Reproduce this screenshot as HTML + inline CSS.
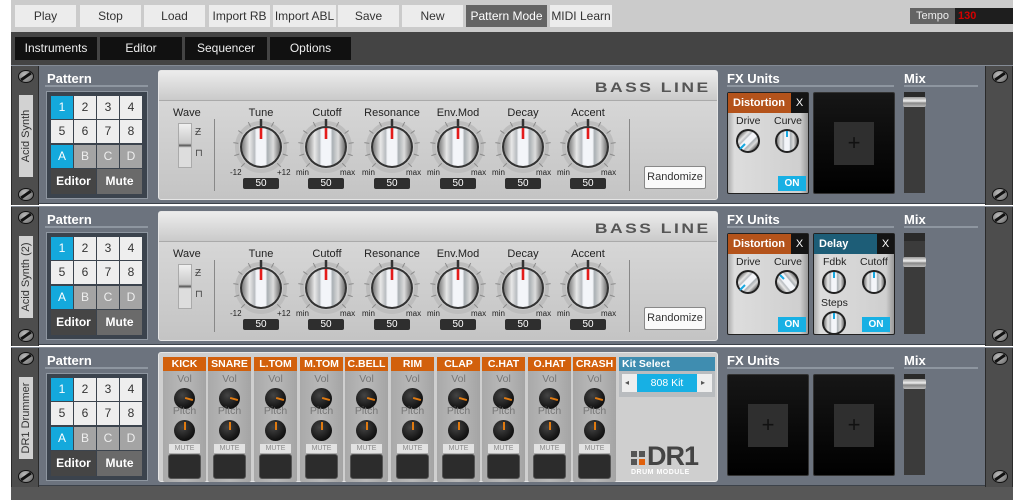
<!DOCTYPE html>
<html><head><meta charset="utf-8"><style>
*{box-sizing:border-box}
body{margin:0;width:1024px;height:500px;overflow:hidden;background:#fff;font-family:"Liberation Sans",sans-serif;position:relative}
.a{position:absolute}
.tb{position:absolute;top:5px;height:22px;background:#ececec;color:#333;font-size:12px;text-align:center;line-height:22px}
.tab{position:absolute;top:37px;height:23px;background:#111;color:#eee;font-size:12px;text-align:center;line-height:23px}
.row{position:absolute;left:11px;width:1002px;height:139px;background:#6c737e;border-top:1px solid #848b95;border-bottom:1px solid #3c424a}
.ear{position:absolute;top:0;width:28px;height:139px;background:#4d4d4d;border-left:1px solid #2a2a2a;border-right:1px solid #2a2a2a}
.scr{position:absolute;left:6px;width:16px;height:13px;border-radius:50%;background:radial-gradient(circle at 40% 35%,#bbb,#666);border:1px solid #111}
.scr:after{content:"";position:absolute;left:1px;top:4px;width:12px;height:3px;background:#111;transform:rotate(-35deg)}
.lbl{position:absolute;left:7px;top:29px;width:14px;height:82px;background:#d2d2d2}
.lbl span{position:absolute;left:50%;top:50%;transform:translate(-50%,-50%) rotate(-90deg);white-space:nowrap;font-size:11px;color:#333}
.h{position:absolute;top:5px;color:#fff;font-weight:bold;font-size:13px}
.hl{position:absolute;top:19px;height:2px;background:#8e96a0}
.grid{position:absolute;left:35px;top:25px;width:102px;height:108px;background:#3b434d;border:1px solid #8e96a0}
.c{position:absolute;width:22px;height:23px;background:#eee;color:#333;font-size:12px;text-align:center;line-height:23px}
.c.b{background:#14a9dc;color:#fff}.c.g{background:#a4a4a4;color:#eee}
.em{position:absolute;top:103px;height:25px;color:#fff;font-size:12px;font-weight:bold;text-align:center;line-height:25px}
.syn{position:absolute;left:147px;top:4px;width:560px;height:130px;background:linear-gradient(#dcdcdc,#c4c4c4);border-radius:3px;border:1px solid #e6e6e6}
.shd{position:absolute;left:0;top:0;width:558px;height:30px;background:linear-gradient(#ececec,#cacaca);border-bottom:1px solid #aaa}
.logo{position:absolute;right:6px;top:8px;font-size:14px;color:#555;font-weight:bold;letter-spacing:2px;transform:scaleX(1.25);transform-origin:right}
.kl{position:absolute;top:36px;width:70px;text-align:center;font-size:11px;color:#222}
.mm{position:absolute;top:97px;font-size:8px;color:#222}
.val{position:absolute;top:107px;width:36px;height:11px;background:#2e2e2e;border-radius:2px;color:#fff;font-size:10px;text-align:center;line-height:11px}
.dv{position:absolute;top:48px;width:1px;height:72px;background:#888}
.fx{position:absolute;top:26px;width:82px;height:102px;background:linear-gradient(90deg,#aaa,#ddd 8%,#cfcfcf 90%,#999);border:1px solid #222;border-radius:2px}
.fxh{position:absolute;left:0;top:0;width:80px;height:20px;color:#fff;font-size:11px;font-weight:bold;line-height:20px;padding-left:5px}
.fxh i{position:absolute;right:0;top:0;width:17px;height:20px;background:#141414;font-style:normal;text-align:center;font-weight:normal}
.fl{position:absolute;font-size:10.5px;color:#222}
.on{position:absolute;width:28px;height:15px;background:#17b0e4;color:#fff;font-size:10px;font-weight:bold;text-align:center;line-height:15px}
.emp{position:absolute;top:26px;width:82px;height:102px;background:linear-gradient(#161616,#000);border-radius:2px;border:1px solid #333}
.emp div{position:absolute;left:20px;top:29px;width:40px;height:43px;background:#2f2f2f;color:#111;font-size:22px;text-align:center;line-height:42px}
.trk{position:absolute;left:893px;top:26px;width:21px;height:101px;background:#3b3b3b;border-top:8px solid #2a2a2a}
.hdl{position:absolute;left:892px;width:23px;height:10px;background:linear-gradient(#999,#eee 40%,#888 60%,#bbb);border-radius:2px}
.ch{position:absolute;top:4px;width:43px;height:125px;background:linear-gradient(90deg,#a9a9a9,#b9b9b9 50%,#a4a4a4);border-radius:2px}
.chh{position:absolute;left:0;top:0;width:43px;height:14px;background:#d2600c;color:#fff;font-size:10.5px;font-weight:bold;text-align:center;line-height:14px}
.dl{position:absolute;left:0;width:43px;text-align:center;font-size:10.5px;color:#777}
.dk{position:absolute;left:11px;width:21px;height:21px;border-radius:50%;background:radial-gradient(circle at 40% 35%,#444,#111 70%)}
.dk.v:after{content:"";position:absolute;left:11px;top:10px;width:8px;height:2px;background:#e07a10;transform:rotate(15deg)}
.dk.p:after{content:"";position:absolute;left:10px;top:2px;width:2px;height:8px;background:#e07a10}
.mu{position:absolute;left:6px;top:87px;width:31px;height:9px;background:#e2e2e2;color:#888;font-size:7px;text-align:center;line-height:9px}
.pad{position:absolute;left:5px;top:97px;width:33px;height:25px;background:#2c2c2c;border-radius:3px;border:1px solid #555}
</style></head><body>
<svg width="0" height="0" style="position:absolute"><defs>
<linearGradient id="kg" x1="0" x2="1" y1="0" y2="0"><stop offset="0" stop-color="#7d7d7d"/><stop offset=".2" stop-color="#e8e8e8"/><stop offset=".33" stop-color="#b8bcc0"/><stop offset=".38" stop-color="#f3f5f9"/><stop offset=".62" stop-color="#f3f5f9"/><stop offset=".67" stop-color="#aab0b4"/><stop offset=".82" stop-color="#dcdcdc"/><stop offset="1" stop-color="#707070"/></linearGradient>
<g id="knob"><circle r="24" fill="none" stroke="#bdbdbd" stroke-width="4"/>
<g stroke="#8a8a8a" stroke-width="1"><line x1="0" y1="-23" x2="0" y2="-28" transform="rotate(-135)"/><line x1="0" y1="-23" x2="0" y2="-28" transform="rotate(-108)"/><line x1="0" y1="-23" x2="0" y2="-28" transform="rotate(-81)"/><line x1="0" y1="-23" x2="0" y2="-28" transform="rotate(-54)"/><line x1="0" y1="-23" x2="0" y2="-28" transform="rotate(-27)"/><line x1="0" y1="-23" x2="0" y2="-28" transform="rotate(27)"/><line x1="0" y1="-23" x2="0" y2="-28" transform="rotate(54)"/><line x1="0" y1="-23" x2="0" y2="-28" transform="rotate(81)"/><line x1="0" y1="-23" x2="0" y2="-28" transform="rotate(108)"/><line x1="0" y1="-23" x2="0" y2="-28" transform="rotate(135)"/></g>
<line x1="0" y1="-21" x2="0" y2="-28" stroke="#333" stroke-width="2.5"/>
<circle r="21" fill="#333"/><circle r="19" fill="url(#kg)"/>
<line x1="0" y1="-19" x2="0" y2="-8" stroke="#e41c1c" stroke-width="2.6"/></g>
<g id="sk"><circle r="12" fill="#222"/><circle r="10" fill="url(#kg)"/></g>
</defs></svg>

<!-- top bar -->
<div class="a" style="left:0;top:0;width:1013px;height:32px;background:#cbcbcb"></div>
<div class="a" style="left:0;top:0;width:11px;height:500px;background:#fff"></div>
<div class="tb" style="left:15px;width:61px">Play</div>
<div class="tb" style="left:80px;width:61px">Stop</div>
<div class="tb" style="left:144px;width:61px">Load</div>
<div class="tb" style="left:209px;width:61px">Import RB</div>
<div class="tb" style="left:273px;width:63px">Import ABL</div>
<div class="tb" style="left:338px;width:61px">Save</div>
<div class="tb" style="left:402px;width:61px">New</div>
<div class="tb" style="left:466px;width:81px;background:#646464;color:#fff">Pattern Mode</div>
<div class="tb" style="left:550px;width:62px">MIDI Learn</div>
<div class="a" style="left:910px;top:8px;width:45px;height:16px;background:#646464;color:#eee;font-size:11px;line-height:16px;text-align:center">Tempo</div>
<div class="a" style="left:955px;top:8px;width:58px;height:16px;background:#1e1e1e;color:#d40000;font-size:11px;font-weight:bold;line-height:16px;padding-left:3px">130</div>
<div class="a" style="left:11px;top:32px;width:1002px;height:33px;background:#444"></div>
<div class="tab" style="left:15px;width:82px">Instruments</div>
<div class="tab" style="left:100px;width:82px">Editor</div>
<div class="tab" style="left:185px;width:82px">Sequencer</div>
<div class="tab" style="left:270px;width:81px">Options</div>
<div class="a" style="left:11px;top:485px;width:1002px;height:15px;background:#575757"></div>

<!-- ROW 1 -->
<div class="row" style="top:65px">
<div class="ear" style="left:0"><div class="scr" style="top:4px"></div><div class="lbl"><span>Acid Synth</span></div><div class="scr" style="top:122px"></div></div>
<div class="h" style="left:36px">Pattern</div><div class="hl" style="left:34px;width:103px"></div>
<div class="grid"></div>
<div class="c b" style="left:40px;top:30px">1</div><div class="c" style="left:63px;top:30px">2</div><div class="c" style="left:86px;top:30px">3</div><div class="c" style="left:109px;top:30px">4</div>
<div class="c" style="left:40px;top:54px">5</div><div class="c" style="left:63px;top:54px">6</div><div class="c" style="left:86px;top:54px">7</div><div class="c" style="left:109px;top:54px">8</div>
<div class="c b" style="left:40px;top:79px">A</div><div class="c g" style="left:63px;top:79px">B</div><div class="c g" style="left:86px;top:79px">C</div><div class="c g" style="left:109px;top:79px">D</div>
<div class="em" style="left:40px;width:45px;background:#454545">Editor</div><div class="em" style="left:86px;width:45px;background:#6a6a6a">Mute</div>
<div class="syn"><div class="shd"><div class="logo">BASS LINE</div></div>
<div class="a" style="left:14px;top:36px;font-size:11px;color:#222">Wave</div>
<div class="a" style="left:19px;top:52px;width:14px;height:45px;background:linear-gradient(#f0f0f0,#c8c8c8 45%,#555 50%,#ddd 55%);border:1px solid #aaa"></div>
<div class="a" style="left:36px;top:56px;font-size:10px;color:#444">Ƶ</div><div class="a" style="left:36px;top:77px;font-size:10px;color:#444">⊓</div>
<div class="dv" style="left:55px"></div><div class="dv" style="left:470px"></div>
<svg class="a" style="left:72px;top:46px" width="60" height="60" viewBox="-30 -30 60 60"><use href="#knob"/></svg>
<svg class="a" style="left:137px;top:46px" width="60" height="60" viewBox="-30 -30 60 60"><use href="#knob"/></svg>
<svg class="a" style="left:203px;top:46px" width="60" height="60" viewBox="-30 -30 60 60"><use href="#knob"/></svg>
<svg class="a" style="left:269px;top:46px" width="60" height="60" viewBox="-30 -30 60 60"><use href="#knob"/></svg>
<svg class="a" style="left:334px;top:46px" width="60" height="60" viewBox="-30 -30 60 60"><use href="#knob"/></svg>
<svg class="a" style="left:399px;top:46px" width="60" height="60" viewBox="-30 -30 60 60"><use href="#knob"/></svg>
<div class="kl" style="left:67px">Tune</div><div class="kl" style="left:133px">Cutoff</div><div class="kl" style="left:198px">Resonance</div><div class="kl" style="left:264px">Env.Mod</div><div class="kl" style="left:329px">Decay</div><div class="kl" style="left:394px">Accent</div>
<div class="mm" style="left:71px">-12</div><div class="mm" style="left:118px">+12</div>
<div class="mm" style="left:137px">min</div><div class="mm" style="left:181px">max</div>
<div class="mm" style="left:203px">min</div><div class="mm" style="left:247px">max</div>
<div class="mm" style="left:268px">min</div><div class="mm" style="left:312px">max</div>
<div class="mm" style="left:333px">min</div><div class="mm" style="left:377px">max</div>
<div class="mm" style="left:398px">min</div><div class="mm" style="left:442px">max</div>
<div class="val" style="left:84px">50</div><div class="val" style="left:149px">50</div><div class="val" style="left:215px">50</div><div class="val" style="left:281px">50</div><div class="val" style="left:346px">50</div><div class="val" style="left:411px">50</div>
<div class="a" style="left:485px;top:95px;width:62px;height:23px;background:#fafafa;border:1px solid #888;border-radius:2px;font-size:11px;color:#333;text-align:center;line-height:21px">Randomize</div>
</div>
<div class="h" style="left:716px">FX Units</div><div class="hl" style="left:716px;width:167px"></div>
<div class="fx" style="left:716px"><div class="fxh" style="background:#b4531b">Distortion<i>X</i></div>
<div class="fl" style="left:8px;top:22px">Drive</div><div class="fl" style="left:46px;top:22px">Curve</div>
<svg class="a" style="left:7px;top:35px" width="26" height="26" viewBox="-13 -13 26 26"><g transform="rotate(45)"><use href="#sk"/></g><line x1="-3" y1="3" x2="-8" y2="8" stroke="#17a8e0" stroke-width="2"/></svg>
<svg class="a" style="left:46px;top:35px" width="26" height="26" viewBox="-13 -13 26 26"><use href="#sk"/><line x1="0" y1="-10" x2="0" y2="-4" stroke="#17a8e0" stroke-width="2"/></svg>
<div class="on" style="left:50px;top:83px">ON</div></div>
<div class="emp" style="left:802px"><div>+</div></div>
<div class="h" style="left:893px">Mix</div><div class="hl" style="left:893px;width:74px"></div>
<div class="trk"></div><div class="hdl" style="top:31px"></div>
<div class="ear" style="left:974px"><div class="scr" style="top:4px"></div><div class="scr" style="top:122px"></div></div>
</div>

<!-- ROW 2 -->
<div class="row" style="top:206px">
<div class="ear" style="left:0"><div class="scr" style="top:4px"></div><div class="lbl"><span>Acid Synth (2)</span></div><div class="scr" style="top:122px"></div></div>
<div class="h" style="left:36px">Pattern</div><div class="hl" style="left:34px;width:103px"></div>
<div class="grid"></div>
<div class="c b" style="left:40px;top:30px">1</div><div class="c" style="left:63px;top:30px">2</div><div class="c" style="left:86px;top:30px">3</div><div class="c" style="left:109px;top:30px">4</div>
<div class="c" style="left:40px;top:54px">5</div><div class="c" style="left:63px;top:54px">6</div><div class="c" style="left:86px;top:54px">7</div><div class="c" style="left:109px;top:54px">8</div>
<div class="c b" style="left:40px;top:79px">A</div><div class="c g" style="left:63px;top:79px">B</div><div class="c g" style="left:86px;top:79px">C</div><div class="c g" style="left:109px;top:79px">D</div>
<div class="em" style="left:40px;width:45px;background:#454545">Editor</div><div class="em" style="left:86px;width:45px;background:#6a6a6a">Mute</div>
<div class="syn"><div class="shd"><div class="logo">BASS LINE</div></div>
<div class="a" style="left:14px;top:36px;font-size:11px;color:#222">Wave</div>
<div class="a" style="left:19px;top:52px;width:14px;height:45px;background:linear-gradient(#f0f0f0,#c8c8c8 45%,#555 50%,#ddd 55%);border:1px solid #aaa"></div>
<div class="a" style="left:36px;top:56px;font-size:10px;color:#444">Ƶ</div><div class="a" style="left:36px;top:77px;font-size:10px;color:#444">⊓</div>
<div class="dv" style="left:55px"></div><div class="dv" style="left:470px"></div>
<svg class="a" style="left:72px;top:46px" width="60" height="60" viewBox="-30 -30 60 60"><use href="#knob"/></svg>
<svg class="a" style="left:137px;top:46px" width="60" height="60" viewBox="-30 -30 60 60"><use href="#knob"/></svg>
<svg class="a" style="left:203px;top:46px" width="60" height="60" viewBox="-30 -30 60 60"><use href="#knob"/></svg>
<svg class="a" style="left:269px;top:46px" width="60" height="60" viewBox="-30 -30 60 60"><use href="#knob"/></svg>
<svg class="a" style="left:334px;top:46px" width="60" height="60" viewBox="-30 -30 60 60"><use href="#knob"/></svg>
<svg class="a" style="left:399px;top:46px" width="60" height="60" viewBox="-30 -30 60 60"><use href="#knob"/></svg>
<div class="kl" style="left:67px">Tune</div><div class="kl" style="left:133px">Cutoff</div><div class="kl" style="left:198px">Resonance</div><div class="kl" style="left:264px">Env.Mod</div><div class="kl" style="left:329px">Decay</div><div class="kl" style="left:394px">Accent</div>
<div class="mm" style="left:71px">-12</div><div class="mm" style="left:118px">+12</div>
<div class="mm" style="left:137px">min</div><div class="mm" style="left:181px">max</div>
<div class="mm" style="left:203px">min</div><div class="mm" style="left:247px">max</div>
<div class="mm" style="left:268px">min</div><div class="mm" style="left:312px">max</div>
<div class="mm" style="left:333px">min</div><div class="mm" style="left:377px">max</div>
<div class="mm" style="left:398px">min</div><div class="mm" style="left:442px">max</div>
<div class="val" style="left:84px">50</div><div class="val" style="left:149px">50</div><div class="val" style="left:215px">50</div><div class="val" style="left:281px">50</div><div class="val" style="left:346px">50</div><div class="val" style="left:411px">50</div>
<div class="a" style="left:485px;top:95px;width:62px;height:23px;background:#fafafa;border:1px solid #888;border-radius:2px;font-size:11px;color:#333;text-align:center;line-height:21px">Randomize</div>
</div>
<div class="h" style="left:716px">FX Units</div><div class="hl" style="left:716px;width:167px"></div>
<div class="fx" style="left:716px"><div class="fxh" style="background:#b4531b">Distortion<i>X</i></div>
<div class="fl" style="left:8px;top:22px">Drive</div><div class="fl" style="left:46px;top:22px">Curve</div>
<svg class="a" style="left:7px;top:35px" width="26" height="26" viewBox="-13 -13 26 26"><g transform="rotate(45)"><use href="#sk"/></g><line x1="-3" y1="3" x2="-8" y2="8" stroke="#17a8e0" stroke-width="2"/></svg>
<svg class="a" style="left:46px;top:35px" width="26" height="26" viewBox="-13 -13 26 26"><g transform="rotate(-40)"><use href="#sk"/></g><line x1="-7" y1="-7" x2="-3" y2="-3" stroke="#17a8e0" stroke-width="2"/></svg>
<div class="on" style="left:50px;top:83px">ON</div></div>
<div class="fx" style="left:802px"><div class="fxh" style="background:#1d5d77">Delay<i>X</i></div>
<div class="fl" style="left:9px;top:22px">Fdbk</div><div class="fl" style="left:46px;top:22px">Cutoff</div>
<svg class="a" style="left:7px;top:35px" width="26" height="26" viewBox="-13 -13 26 26"><use href="#sk"/><line x1="0" y1="-10" x2="0" y2="-4" stroke="#17a8e0" stroke-width="2"/></svg>
<svg class="a" style="left:47px;top:35px" width="26" height="26" viewBox="-13 -13 26 26"><use href="#sk"/><line x1="0" y1="-10" x2="0" y2="-4" stroke="#17a8e0" stroke-width="2"/></svg>
<div class="fl" style="left:7px;top:63px">Steps</div>
<svg class="a" style="left:7px;top:76px" width="26" height="26" viewBox="-13 -13 26 26"><use href="#sk"/><line x1="0" y1="-10" x2="0" y2="-4" stroke="#17a8e0" stroke-width="2"/></svg>
<div class="on" style="left:48px;top:83px">ON</div></div>
<div class="h" style="left:893px">Mix</div><div class="hl" style="left:893px;width:74px"></div>
<div class="trk"></div><div class="hdl" style="top:50px"></div>
<div class="ear" style="left:974px"><div class="scr" style="top:4px"></div><div class="scr" style="top:122px"></div></div>
</div>

<!-- ROW 3 -->
<div class="row" style="top:347px">
<div class="ear" style="left:0"><div class="scr" style="top:4px"></div><div class="lbl"><span>DR1 Drummer</span></div><div class="scr" style="top:122px"></div></div>
<div class="h" style="left:36px">Pattern</div><div class="hl" style="left:34px;width:103px"></div>
<div class="grid"></div>
<div class="c b" style="left:40px;top:30px">1</div><div class="c" style="left:63px;top:30px">2</div><div class="c" style="left:86px;top:30px">3</div><div class="c" style="left:109px;top:30px">4</div>
<div class="c" style="left:40px;top:54px">5</div><div class="c" style="left:63px;top:54px">6</div><div class="c" style="left:86px;top:54px">7</div><div class="c" style="left:109px;top:54px">8</div>
<div class="c b" style="left:40px;top:79px">A</div><div class="c g" style="left:63px;top:79px">B</div><div class="c g" style="left:86px;top:79px">C</div><div class="c g" style="left:109px;top:79px">D</div>
<div class="em" style="left:40px;width:45px;background:#454545">Editor</div><div class="em" style="left:86px;width:45px;background:#6a6a6a">Mute</div>
<div class="syn" style="background:#cfcfcf">
<div class="ch" style="left:4px"><div class="chh">KICK</div><div class="dl" style="top:16px">Vol</div><div class="dk v" style="top:31px"></div><div class="dl" style="top:48px">Pitch</div><div class="dk p" style="top:63px"></div><div class="mu">MUTE</div><div class="pad"></div></div>
<div class="ch" style="left:49px"><div class="chh">SNARE</div><div class="dl" style="top:16px">Vol</div><div class="dk v" style="top:31px"></div><div class="dl" style="top:48px">Pitch</div><div class="dk p" style="top:63px"></div><div class="mu">MUTE</div><div class="pad"></div></div>
<div class="ch" style="left:95px"><div class="chh">L.TOM</div><div class="dl" style="top:16px">Vol</div><div class="dk v" style="top:31px"></div><div class="dl" style="top:48px">Pitch</div><div class="dk p" style="top:63px"></div><div class="mu">MUTE</div><div class="pad"></div></div>
<div class="ch" style="left:141px"><div class="chh">M.TOM</div><div class="dl" style="top:16px">Vol</div><div class="dk v" style="top:31px"></div><div class="dl" style="top:48px">Pitch</div><div class="dk p" style="top:63px"></div><div class="mu">MUTE</div><div class="pad"></div></div>
<div class="ch" style="left:186px"><div class="chh">C.BELL</div><div class="dl" style="top:16px">Vol</div><div class="dk v" style="top:31px"></div><div class="dl" style="top:48px">Pitch</div><div class="dk p" style="top:63px"></div><div class="mu">MUTE</div><div class="pad"></div></div>
<div class="ch" style="left:232px"><div class="chh">RIM</div><div class="dl" style="top:16px">Vol</div><div class="dk v" style="top:31px"></div><div class="dl" style="top:48px">Pitch</div><div class="dk p" style="top:63px"></div><div class="mu">MUTE</div><div class="pad"></div></div>
<div class="ch" style="left:278px"><div class="chh">CLAP</div><div class="dl" style="top:16px">Vol</div><div class="dk v" style="top:31px"></div><div class="dl" style="top:48px">Pitch</div><div class="dk p" style="top:63px"></div><div class="mu">MUTE</div><div class="pad"></div></div>
<div class="ch" style="left:323px"><div class="chh">C.HAT</div><div class="dl" style="top:16px">Vol</div><div class="dk v" style="top:31px"></div><div class="dl" style="top:48px">Pitch</div><div class="dk p" style="top:63px"></div><div class="mu">MUTE</div><div class="pad"></div></div>
<div class="ch" style="left:369px"><div class="chh">O.HAT</div><div class="dl" style="top:16px">Vol</div><div class="dk v" style="top:31px"></div><div class="dl" style="top:48px">Pitch</div><div class="dk p" style="top:63px"></div><div class="mu">MUTE</div><div class="pad"></div></div>
<div class="ch" style="left:414px"><div class="chh">CRASH</div><div class="dl" style="top:16px">Vol</div><div class="dk v" style="top:31px"></div><div class="dl" style="top:48px">Pitch</div><div class="dk p" style="top:63px"></div><div class="mu">MUTE</div><div class="pad"></div></div>
<div class="a" style="left:460px;top:4px;width:96px;height:40px;background:#b9bcbf"><div class="a" style="left:0;top:0;width:96px;height:14px;background:#3f8db0;color:#fff;font-size:10.5px;font-weight:bold;line-height:14px;padding-left:3px">Kit Select</div>
<div class="a" style="left:3px;top:17px;width:90px;height:18px;background:#eee;font-size:8px;color:#555;line-height:18px;padding-left:3px">◂</div>
<div class="a" style="left:18px;top:17px;width:60px;height:18px;background:#17b0e4;color:#fff;font-size:10.5px;text-align:center;line-height:18px">808 Kit</div>
<div class="a" style="left:82px;top:17px;font-size:8px;color:#555;line-height:18px">▸</div></div>
<div class="a" style="left:472px;top:98px;width:6px;height:6px;background:#555"></div><div class="a" style="left:480px;top:98px;width:6px;height:6px;background:#555"></div>
<div class="a" style="left:472px;top:106px;width:6px;height:6px;background:#555"></div><div class="a" style="left:480px;top:106px;width:6px;height:6px;background:#e0600c"></div>
<div class="a" style="left:488px;top:90px;font-size:27px;font-weight:bold;color:#444;line-height:26px;letter-spacing:-1px">DR1</div>
<div class="a" style="left:472px;top:116px;font-size:7px;font-weight:bold;color:#fff;letter-spacing:.5px">DRUM MODULE</div>
</div>
<div class="h" style="left:716px">FX Units</div><div class="hl" style="left:716px;width:167px"></div>
<div class="emp" style="left:716px"><div>+</div></div>
<div class="emp" style="left:802px"><div>+</div></div>
<div class="h" style="left:893px">Mix</div><div class="hl" style="left:893px;width:74px"></div>
<div class="trk"></div><div class="hdl" style="top:31px"></div>
<div class="ear" style="left:974px"><div class="scr" style="top:4px"></div><div class="scr" style="top:122px"></div></div>
</div>
</body></html>
